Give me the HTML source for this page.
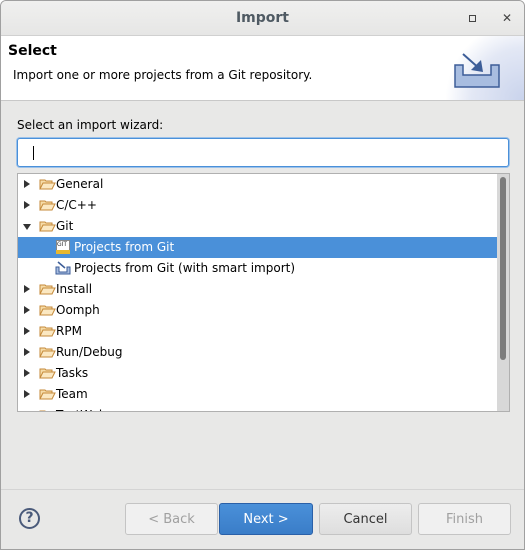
<html><head><style>
body{margin:0;width:525px;height:550px;overflow:hidden;font-family:"DejaVu Sans",sans-serif;font-size:12px;background:#fff}
.win{position:absolute;left:0;top:0;width:523px;height:548px;border:1px solid #a0a0a0;border-radius:6px 6px 0 0;background:#e8e8e7;overflow:hidden}
.title{position:absolute;left:0;top:0;width:523px;height:34px;background:linear-gradient(#f0f0ef,#e6e6e5);border-bottom:1px solid #d0d0d0;text-align:center;line-height:34px;font-weight:bold;font-size:14px;color:#4f5a63}
.hdr{position:absolute;left:0;top:35px;width:523px;height:64px;background:#fff;border-bottom:1px solid #c8c8c8}
.abs{position:absolute}
.tree{position:absolute;left:16px;top:172px;width:491px;height:237px;background:#fff;border:1px solid #b0b0b0;overflow:hidden}
.row{position:absolute;left:0;width:479px;height:21px;line-height:21px}
.arr{position:absolute;left:6px;top:6px;width:0;height:0;border-left:6px solid #333;border-top:4.5px solid transparent;border-bottom:4.5px solid transparent}
.arrd{position:absolute;left:5px;top:8px;border-top:6px solid #333;border-left:4.5px solid transparent;border-right:4.5px solid transparent}
.txt{position:absolute;left:38px}
.btn{position:absolute;top:502px;height:32px;border:1px solid #c4c4c4;border-radius:3px;text-align:center;line-height:32px;font-size:13px;box-sizing:border-box}
</style></head><body><div class="win">
<div class="title">Import
<span class="abs" style="left:468px;top:14px;width:5px;height:5px;border:1px solid #444"></span>
<span class="abs" style="left:501px;top:0;font-size:12px;color:#444">✕</span></div>
<div class="hdr">
<div class="abs" style="left:7px;top:7px;font-weight:bold;font-size:14px">Select</div>
<div class="abs" style="left:12px;top:32px">Import one or more projects from a Git repository.</div>
<div class="abs" style="left:440px;top:0;width:83px;height:64px;background:radial-gradient(circle at 100% 100%,#c9d3ec 0,#e3e8f5 50%,#fff 75%)"></div>
<svg class="abs" style="left:452px;top:15px" width="50" height="40"><path d="M2 14h8v10h28V14h8v22H2z" fill="#a8bde0" stroke="#3c5d98" stroke-width="1.5"/><path d="M10 3l18 16" stroke="#3c5d98" stroke-width="2"/><path d="M30 21l-2-12-10 10z" fill="#3c5d98"/></svg>
</div>
<div class="abs" style="left:16px;top:117px">Select an import wizard:</div>
<div class="abs" style="left:16px;top:137px;width:490px;height:27px;background:#fff;border:1px solid #4a90d9;border-radius:3px;box-shadow:0 0 0 1px #9cc2ea"><div class="abs" style="left:15px;top:7px;width:1px;height:14px;background:#000"></div></div>
<div class="tree">
<svg width="0" height="0" style="position:absolute"><defs><g id="f"><path d="M1 3h5l1 1h6v8H1z" fill="#f6dca8" stroke="#c58a3a"/><path d="M1 12l3-6h12l-3 6z" fill="#fbe8c2" stroke="#c58a3a"/></g></defs></svg>
<div class="row" style="top:0"><span class="arr"></span><svg class="abs" style="left:21px;top:3px" width="17" height="14"><use href="#f"/></svg><span class="txt">General</span></div>
<div class="row" style="top:21px"><span class="arr"></span><svg class="abs" style="left:21px;top:3px" width="17" height="14"><use href="#f"/></svg><span class="txt">C/C++</span></div>
<div class="row" style="top:42px"><span class="arrd"></span><svg class="abs" style="left:21px;top:3px" width="17" height="14"><use href="#f"/></svg><span class="txt">Git</span></div>
<div class="row" style="top:63px;background:#4a90d9;color:#fff"><span class="abs" style="left:38px;top:3px;width:14px;height:12px;background:#fff;border:1px solid #888;font-size:6px;line-height:8px;color:#333;box-sizing:border-box">GIT</span><span class="abs" style="left:38px;top:13px;width:14px;height:4px;background:#e8b830"></span><span class="txt" style="left:56px">Projects from Git</span></div>
<div class="row" style="top:84px"><svg class="abs" style="left:37px;top:3px" width="16" height="14"><path d="M1 6h3v5h8V6h3v7H1z" fill="#a8bde0" stroke="#3c5d98"/><path d="M3 1l7 6" stroke="#3c5d98" stroke-width="1.5"/></svg><span class="txt" style="left:56px">Projects from Git (with smart import)</span></div>
<div class="row" style="top:105px"><span class="arr"></span><svg class="abs" style="left:21px;top:3px" width="17" height="14"><use href="#f"/></svg><span class="txt">Install</span></div>
<div class="row" style="top:126px"><span class="arr"></span><svg class="abs" style="left:21px;top:3px" width="17" height="14"><use href="#f"/></svg><span class="txt">Oomph</span></div>
<div class="row" style="top:147px"><span class="arr"></span><svg class="abs" style="left:21px;top:3px" width="17" height="14"><use href="#f"/></svg><span class="txt">RPM</span></div>
<div class="row" style="top:168px"><span class="arr"></span><svg class="abs" style="left:21px;top:3px" width="17" height="14"><use href="#f"/></svg><span class="txt">Run/Debug</span></div>
<div class="row" style="top:189px"><span class="arr"></span><svg class="abs" style="left:21px;top:3px" width="17" height="14"><use href="#f"/></svg><span class="txt">Tasks</span></div>
<div class="row" style="top:210px"><span class="arr"></span><svg class="abs" style="left:21px;top:3px" width="17" height="14"><use href="#f"/></svg><span class="txt">Team</span></div>
<div class="row" style="top:231px"><span class="arr"></span><svg class="abs" style="left:21px;top:3px" width="17" height="14"><use href="#f"/></svg><span class="txt">TextWeb</span></div>
<div class="abs" style="left:479px;top:0;width:12px;height:237px;background:#d8d8d8"><div class="abs" style="left:3px;top:3px;width:6px;height:183px;background:#7c7c7c;border-radius:3px"></div></div>
</div>
<div class="abs" style="left:0;top:488px;width:523px;height:1px;background:#d4d4d4"></div>
<div class="abs" style="left:18px;top:507px;width:17px;height:17px;border:2px solid #4a5a7a;border-radius:50%;text-align:center;line-height:17px;font-weight:bold;font-size:14px;color:#4a5a7a">?</div>
<div class="btn" style="left:124px;width:93px;background:#f0f0f0;color:#a0a0a0">&lt; Back</div>
<div class="btn" style="left:218px;width:94px;background:linear-gradient(#4a90d9,#3a7dc8);border-color:#2a60a8;color:#fff">Next &gt;</div>
<div class="btn" style="left:318px;width:93px;background:linear-gradient(#ededed,#dedede);color:#333">Cancel</div>
<div class="btn" style="left:417px;width:93px;background:#f0f0f0;color:#a0a0a0">Finish</div>
</div></body></html>
